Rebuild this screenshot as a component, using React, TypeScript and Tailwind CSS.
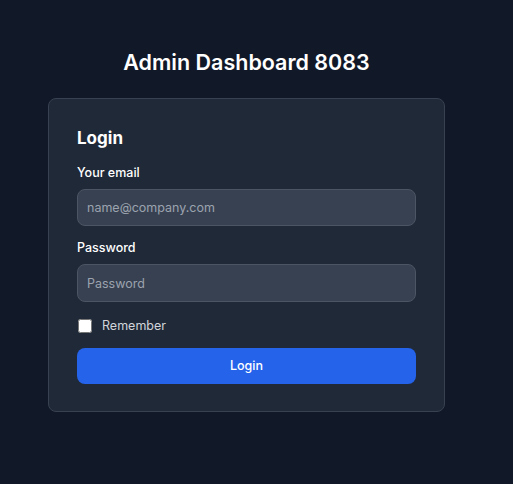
export default function App() {
    return (
        <div
            className="min-h-screen bg-[#111827] flex flex-col items-center pt-[46px] pr-[20px]"
            style={{ fontFamily: "Inter, 'Noto Sans', sans-serif" }}
        >
            <h1 className="text-[21.5px] leading-8 font-semibold text-white">Admin Dashboard 8083</h1>
            <div className="mt-5 w-[397px] bg-[#1f2937] border border-[#374151] rounded-lg px-7 pt-[25px] pb-[27px]">
                <h2 className="text-[17px] leading-7 font-bold text-white mb-[11px]">Login</h2>
                <form className="space-y-3" onSubmit={(e) => e.preventDefault()}>
                    <div>
                        <label className="block text-[12.5px] leading-5 font-medium text-white mb-1.5">Your email</label>
                        <input
                            type="email"
                            placeholder="name@company.com"
                            className="w-full h-[37px] bg-[#374151] border border-[#4b5563] rounded-lg px-[9px] text-[12.5px] text-white placeholder-[#9ca3af] outline-none"
                        />
                    </div>
                    <div>
                        <label className="block text-[12.5px] leading-5 font-medium text-white mb-1.5">Password</label>
                        <input
                            type="password"
                            placeholder="Password"
                            className="w-full h-[38px] bg-[#374151] border border-[#4b5563] rounded-lg px-[9px] text-[12.5px] text-white placeholder-[#9ca3af] outline-none"
                        />
                    </div>
                    <div className="flex items-center h-5 pt-[2px] box-content">
                        <input type="checkbox" className="w-[14px] h-[14px] ml-px" />
                        <span className="ml-[10px] text-[12.5px] text-[#d1d5db]">Remember</span>
                    </div>
                    <button
                        type="submit"
                        className="w-full h-9 bg-[#2563eb] text-white text-[12.5px] font-medium rounded-lg"
                    >
                        Login
                    </button>
                </form>
            </div>
        </div>
    );
}
